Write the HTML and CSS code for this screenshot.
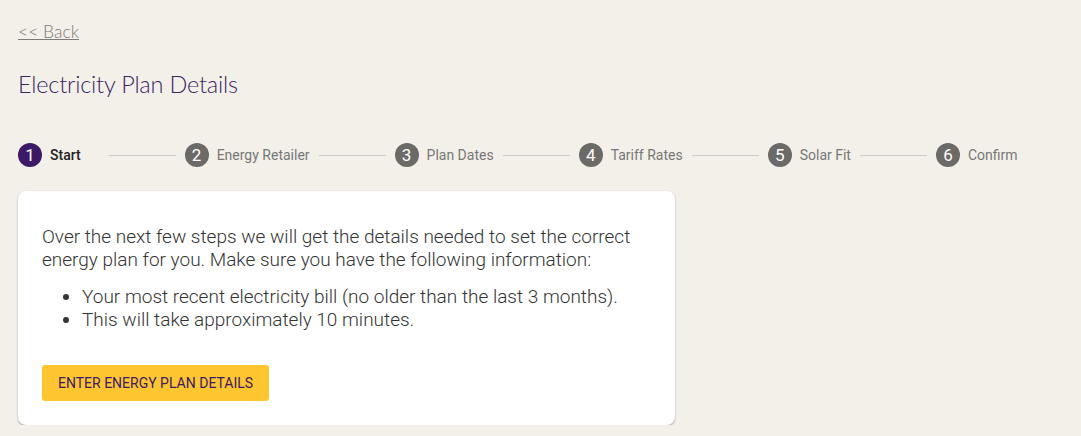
FILE: index.html
```html
<!DOCTYPE html>
<html>
<head>
<meta charset="utf-8">
<link rel="stylesheet" href="styles.css">
</head>
<body>
<div class="page">
  <a class="back" href="#">&lt;&lt; Back</a>
  <h1 class="title">Electricity Plan Details</h1>
  <div class="stepper">
    <div class="step active"><span class="num">1</span><span class="label">Start</span></div>
    <div class="line first"></div>
    <div class="step"><span class="num">2</span><span class="label">Energy Retailer</span></div>
    <div class="line"></div>
    <div class="step"><span class="num">3</span><span class="label">Plan Dates</span></div>
    <div class="line"></div>
    <div class="step"><span class="num">4</span><span class="label">Tariff Rates</span></div>
    <div class="line"></div>
    <div class="step"><span class="num">5</span><span class="label">Solar Fit</span></div>
    <div class="line"></div>
    <div class="step"><span class="num">6</span><span class="label">Confirm</span></div>
  </div>
  <div class="card">
    <p class="intro">Over the next few steps we will get the details needed to set the correct energy plan for you. Make sure you have the following information:</p>
    <ul class="list">
      <li>Your most recent electricity bill (no older than the last 3 months).</li>
      <li>This will take approximately 10 minutes.</li>
    </ul>
    <button class="btn">ENTER ENERGY PLAN DETAILS</button>
  </div>
</div>
</body>
</html>
```
FILE: styles.css
```css
html, body {
  margin: 0;
  padding: 0;
  background: #f3f0ea;
}
body {
  font-family: Roboto, "Liberation Sans", sans-serif;
}
.page {
  padding: 20px 18px 0 18px;
  display: flex;
  flex-direction: column;
  align-items: flex-start;
}
.back {
  font-family: Lato, "Open Sans", sans-serif;
  font-weight: 300;
  font-size: 17.5px;
  line-height: 24px;
  color: #7d7a78;
  text-decoration: underline;
}
.title {
  margin: 25px 0 0 0;
  font-family: Lato, "Open Sans", sans-serif;
  font-weight: 300;
  font-size: 23.5px;
  line-height: 30px;
  color: #3d2461;
  letter-spacing: -0.2px;
}
.stepper {
  margin-top: 44px;
  display: flex;
  align-items: center;
  height: 24px;
}
.step {
  display: flex;
  align-items: center;
  gap: 8px;
}
.num {
  width: 24px;
  height: 24px;
  border-radius: 50%;
  background: #6b6a66;
  color: #fff;
  font-size: 17px;
  line-height: 24px;
  text-align: center;
}
.step.active .num {
  background: #3c1a66;
}
.label {
  font-size: 14px;
  color: #777;
}
.step.active .label {
  color: #222;
  font-weight: 500;
}
.line {
  width: 67px;
  height: 1px;
  background: #cfccc8;
  margin: 0 9px;
}
.line.first {
  margin-left: 28px;
}
.card {
  margin-top: 24px;
  width: 657px;
  box-sizing: border-box;
  background: #fff;
  border-radius: 8px;
  box-shadow: 0 1px 2px rgba(0,0,0,0.35);
  padding: 35px 24px 24px 24px;
  color: #333;
  font-weight: 300;
  font-size: 19px;
  line-height: 22.5px;
}
.intro {
  margin: 0;
}
.list {
  margin: 15px 0 0 0;
  padding-left: 40px;
}
.btn {
  margin-top: 34px;
  background: #fdc530;
  border: none;
  border-radius: 3px;
  height: 36px;
  padding: 0 16px;
  font-family: Roboto, "Liberation Sans", sans-serif;
  font-size: 14px;
  color: #3c1a66;
  cursor: pointer;
}
```
